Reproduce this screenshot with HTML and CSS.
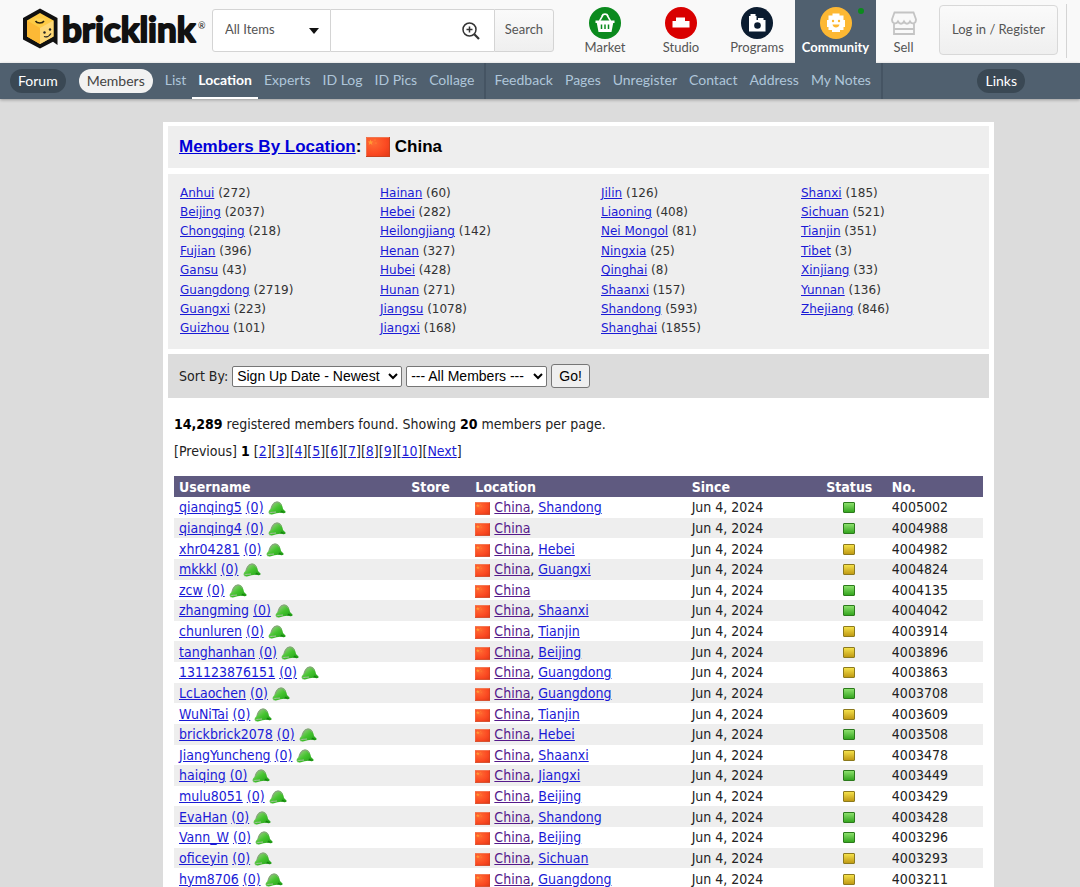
FILE: index.html
```html
<!DOCTYPE html>
<html lang="en">
<head>
    <meta charset="UTF-8">
    <meta name="viewport" content="width=device-width, initial-scale=1.0">
    <title>BrickLink Members By Location: China</title>
    <link rel="stylesheet" href="styles.css">
</head>
<body>
    <svg class="sprite" aria-hidden="true">
        <defs>
            <linearGradient id="capFill" x1="0" y1="0" x2="1" y2="1">
                <stop offset="0" stop-color="#b4cf9e"/>
                <stop offset="0.5" stop-color="#45c42f"/>
                <stop offset="1" stop-color="#1c9a14"/>
            </linearGradient>
            <radialGradient id="flagFill" cx="0.3" cy="0.3" r="0.9">
                <stop offset="0" stop-color="#ff6c33"/>
                <stop offset="0.6" stop-color="#fb4a22"/>
                <stop offset="1" stop-color="#e43a18"/>
            </radialGradient>
        </defs>
        <symbol id="cap" viewBox="0 0 18 14">
            <path d="M1 12.500C0 11 1 9.500 2.500 8C3.500 4 5.500 0.500 9 0.500C12.500 0.500 14.500 4 15 8L17.500 10.500C18 12 16.500 12.500 14.500 12C11 11.200 8 12.500 5 13.200C3 13.600 1.500 13.500 1 12.500Z" fill="url(#capFill)"/>
            <path d="M1.200 12.300C3 10.800 5 11.500 8 11" fill="none" stroke="#a9bfa2" stroke-width="1"/>
            <path d="M3 7.500C4 4 6 1.200 9 1C11 1 12.500 2.500 13.200 4.500" fill="none" stroke="#8f9c88" stroke-width="1"/>
            <path d="M13.500 9.500L17 11.500L12 11.500Z" fill="#16840f"/>
        </symbol>
        <symbol id="flag" viewBox="0 0 24 20">
            <rect width="24" height="20" fill="url(#flagFill)"/>
            <path d="M0.500 19.500V0.500H23.500" fill="none" stroke="#f0754f"/>
            <path d="M0 19.500H23.500V0" fill="none" stroke="#c9421f"/>
            <path d="M4.500 2.500L5.300 4.500L7.400 4.600L5.800 5.900L6.400 8L4.500 6.800L2.700 8L3.200 5.900L1.600 4.600L3.700 4.500Z" fill="#ff9a35"/>
            <circle cx="9" cy="3" r="0.600" fill="#ff9a35"/>
            <circle cx="10" cy="6" r="0.600" fill="#ff9a35"/>
        </symbol>
    </svg>

    <header class="header">
        <a href="#" class="logo" aria-label="bricklink">
            <svg width="182" height="44" viewBox="0 0 182 44">
                <path d="M18 0.500L35.500 10V37L31 33.800L18 40.500L1 31.500V10Z" fill="#111"/>
                <path d="M18 5L31.500 12.500V28.500L18 36L5 28.500V12.500Z" fill="#fecb45"/>
                <path d="M18 20L31.500 12.500V28.500L18 36Z" fill="#fdd878"/>
                <path d="M5 12.500L18 20V36L5 28.500Z" fill="#fcb936"/>
                <path d="M13 10.500V13.500C14.500 16 20.500 16 22.500 13.500V10.500" fill="#ffd65a"/>
                <path d="M13.500 13C15 15.500 20.500 15.500 22 13" fill="none" stroke="#2b220c" stroke-width="1.500"/>
                <circle cx="22.500" cy="24.500" r="1.200" fill="#222"/>
                <circle cx="28" cy="21.500" r="1.200" fill="#222"/>
                <path d="M22 28.500C24.500 29.500 27.500 28 29 25.500" fill="none" stroke="#222" stroke-width="1.300"/>
                <text x="40" y="34" class="logo-text">bricklink</text>
                <text x="176" y="21" class="logo-mark">®</text>
            </svg>
        </a>
        <form class="search">
            <select class="search-type" aria-label="Item type">
                <option>All Items</option>
            </select>
            <svg class="search-arrow" width="10" height="6" viewBox="0 0 10 6"><path d="M0 0H10L5 6Z" fill="#111"/></svg>
            <input type="text" class="search-input" aria-label="Search text">
            <svg class="search-zoom" width="18" height="18" viewBox="0 0 18 18" fill="none" stroke="#333">
                <circle cx="7.500" cy="7.500" r="6.500" stroke-width="1.500"/>
                <path d="M4.500 7.500H10.500M7.500 4.500V10.500" stroke-width="1.500"/>
                <path d="M12.300 12.300L17 17" stroke-width="2.200"/>
            </svg>
            <button type="submit" class="search-button">Search</button>
        </form>
        <nav class="sections" aria-label="Sections">
            <a href="#" class="section">
                <svg width="34" height="34" viewBox="0 0 34 34">
                    <circle cx="17" cy="17" r="16" fill="#0b8a1e"/>
                    <path d="M7.500 14.500H26.500V17H25.200L23.500 26H10.500L8.800 17H7.500Z" fill="#fff"/>
                    <path d="M11.500 15L15 9M22.500 15L19 9" stroke="#fff" stroke-width="1.500"/>
                    <path d="M14 10C15 7.500 19 7.500 20 10" fill="none" stroke="#fff" stroke-width="1.600"/>
                    <path d="M13.500 18.500V23M17 18.500V23M20.500 18.500V23" stroke="#0b8a1e" stroke-width="1.500"/>
                </svg>
                <span>Market</span>
            </a>
            <a href="#" class="section">
                <svg width="34" height="34" viewBox="0 0 34 34">
                    <circle cx="17" cy="17" r="16" fill="#d90000"/>
                    <path d="M8.500 15H12V11.500H21V15H25.500V21.500H8.500Z" fill="#fff"/>
                </svg>
                <span>Studio</span>
            </a>
            <a href="#" class="section">
                <svg width="34" height="34" viewBox="0 0 34 34">
                    <circle cx="17" cy="17" r="16" fill="#0b1c30"/>
                    <path d="M9 25.500V10H10.500V8H15.500V10H16.500V14H18V12H23.500V14H25.500V25.500Z" fill="#fff"/>
                    <circle cx="17.500" cy="19.500" r="3.300" fill="#0b1c30"/>
                </svg>
                <span>Programs</span>
            </a>
            <a href="#" class="section section-active">
                <svg width="34" height="34" viewBox="0 0 34 34">
                    <circle cx="17" cy="17" r="16" fill="#fdb833"/>
                    <path d="M13.500 7.500H20.500V9.500H24.500V14H26V21H24.500V24H21V26H13V24H9.500V21H8V14H9.500V9.500H13.500Z" fill="#fff"/>
                    <circle cx="14" cy="15" r="1.200" fill="#fdb833"/>
                    <circle cx="20" cy="15" r="1.200" fill="#fdb833"/>
                    <path d="M13.500 18.500H20.500C20 22.500 14 22.500 13.500 18.500Z" fill="#fdb833"/>
                </svg>
                <span>Community</span>
                <i class="online-dot"></i>
            </a>
            <a href="#" class="section section-sell">
                <svg width="34" height="34" viewBox="0 0 34 34" fill="none" stroke="#c4c4c4" stroke-width="1.800">
                    <path d="M7.500 6.500H26.500L29 13.500C29 18 24.500 18.500 23 15.500C21.500 18.500 18.500 18.500 17 15.500C15.500 18.500 12.500 18.500 11 15.500C9.500 18.500 5 18 5 13.500Z"/>
                    <path d="M7 17.500V28H27V17.500M7 23H27"/>
                </svg>
                <span>Sell</span>
            </a>
        </nav>
        <div class="account">
            <button type="button" class="login-button">Log in / Register</button>
        </div>
    </header>

    <nav class="menu" aria-label="Community">
        <a href="#" class="pill">Forum</a>
        <a href="#" class="pill pill-light">Members</a>
        <div class="menu-group">
            <a href="#">List</a>
            <a href="#" class="current">Location</a>
            <a href="#">Experts</a>
            <a href="#">ID Log</a>
            <a href="#">ID Pics</a>
            <a href="#">Collage</a>
        </div>
        <div class="menu-group">
            <a href="#">Feedback</a>
            <a href="#">Pages</a>
            <a href="#">Unregister</a>
            <a href="#">Contact</a>
            <a href="#">Address</a>
            <a href="#">My Notes</a>
        </div>
        <a href="#" class="pill pill-links">Links</a>
    </nav>

    <main class="content">
        <h1 class="title"><a href="#">Members By Location</a>: <svg class="flag-big"><use href="#flag"/></svg> China</h1>

        <div class="provinces">
            <ul>
                <li><a href="#">Anhui</a> (272)</li>
                <li><a href="#">Beijing</a> (2037)</li>
                <li><a href="#">Chongqing</a> (218)</li>
                <li><a href="#">Fujian</a> (396)</li>
                <li><a href="#">Gansu</a> (43)</li>
                <li><a href="#">Guangdong</a> (2719)</li>
                <li><a href="#">Guangxi</a> (223)</li>
                <li><a href="#">Guizhou</a> (101)</li>
            </ul>
            <ul>
                <li><a href="#">Hainan</a> (60)</li>
                <li><a href="#">Hebei</a> (282)</li>
                <li><a href="#">Heilongjiang</a> (142)</li>
                <li><a href="#">Henan</a> (327)</li>
                <li><a href="#">Hubei</a> (428)</li>
                <li><a href="#">Hunan</a> (271)</li>
                <li><a href="#">Jiangsu</a> (1078)</li>
                <li><a href="#">Jiangxi</a> (168)</li>
            </ul>
            <ul>
                <li><a href="#">Jilin</a> (126)</li>
                <li><a href="#">Liaoning</a> (408)</li>
                <li><a href="#">Nei Mongol</a> (81)</li>
                <li><a href="#">Ningxia</a> (25)</li>
                <li><a href="#">Qinghai</a> (8)</li>
                <li><a href="#">Shaanxi</a> (157)</li>
                <li><a href="#">Shandong</a> (593)</li>
                <li><a href="#">Shanghai</a> (1855)</li>
            </ul>
            <ul>
                <li><a href="#">Shanxi</a> (185)</li>
                <li><a href="#">Sichuan</a> (521)</li>
                <li><a href="#">Tianjin</a> (351)</li>
                <li><a href="#">Tibet</a> (3)</li>
                <li><a href="#">Xinjiang</a> (33)</li>
                <li><a href="#">Yunnan</a> (136)</li>
                <li><a href="#">Zhejiang</a> (846)</li>
            </ul>
        </div>

        <form class="sort">
            <label for="sortBy">Sort By:</label>
            <select id="sortBy" class="sort-by">
                <option>Sign Up Date - Newest</option>
            </select>
            <select class="sort-members" aria-label="Members">
                <option>--- All Members ---</option>
            </select>
            <button type="submit">Go!</button>
        </form>

        <div class="results">
            <p><b>14,289</b> registered members found. Showing <b>20</b> members per page.</p>
            <p>[Previous] <b>1</b> [<a href="#">2</a>][<a href="#">3</a>][<a href="#">4</a>][<a href="#">5</a>][<a href="#">6</a>][<a href="#">7</a>][<a href="#">8</a>][<a href="#">9</a>][<a href="#">10</a>][<a href="#">Next</a>]</p>

            <table class="members">
                <thead>
                    <tr>
                        <th class="col-user">Username</th>
                        <th class="col-store">Store</th>
                        <th class="col-location">Location</th>
                        <th class="col-since">Since</th>
                        <th class="col-status">Status</th>
                        <th class="col-no">No.</th>
                    </tr>
                </thead>
                <tbody id="memberRows"></tbody>
            </table>
        </div>
    </main>
    <script src="members.js"></script>
</body>
</html>
```
FILE: members.js
```js
// name, province, online status, member number
const members = [
    ['qianqing5', 'Shandong', 'green', 4005002],
    ['qianqing4', '', 'green', 4004988],
    ['xhr04281', 'Hebei', 'yellow', 4004982],
    ['mkkkl', 'Guangxi', 'yellow', 4004824],
    ['zcw', '', 'green', 4004135],
    ['zhangming', 'Shaanxi', 'green', 4004042],
    ['chunluren', 'Tianjin', 'yellow', 4003914],
    ['tanghanhan', 'Beijing', 'yellow', 4003896],
    ['131123876151', 'Guangdong', 'yellow', 4003863],
    ['LcLaochen', 'Guangdong', 'green', 4003708],
    ['WuNiTai', 'Tianjin', 'yellow', 4003609],
    ['brickbrick2078', 'Hebei', 'green', 4003508],
    ['JiangYuncheng', 'Shaanxi', 'yellow', 4003478],
    ['haiqing', 'Jiangxi', 'green', 4003449],
    ['mulu8051', 'Beijing', 'yellow', 4003429],
    ['EvaHan', 'Shandong', 'green', 4003428],
    ['Vann_W', 'Beijing', 'green', 4003296],
    ['oficeyin', 'Sichuan', 'yellow', 4003293],
    ['hym8706', 'Guangdong', 'yellow', 4003211]
];

document.getElementById('memberRows').innerHTML = members.map(([name, province, status, no]) => `
    <tr>
        <td><a href="#">${name}</a> <a href="#">(0)</a> <svg class="cap"><use href="#cap"/></svg></td>
        <td></td>
        <td><svg class="flag"><use href="#flag"/></svg> <a href="#" class="seen">China</a>${province ? `, <a href="#">${province}</a>` : ''}</td>
        <td>Jun 4, 2024</td>
        <td class="status"><i class="light ${status}"></i></td>
        <td>${no}</td>
    </tr>`).join('');
```
FILE: styles.css
```css
* {
    box-sizing: border-box;
}

body {
    margin: 0;
    background-color: #dcdcdc;
    color: #222;
    font-family: "DejaVu Sans Condensed", "DejaVu Sans", sans-serif;
    font-size: 14px;
}

a {
    color: #1a1ad6;
}

.sprite {
    position: absolute;
    width: 0;
    height: 0;
}

/* top bar */
.header {
    display: flex;
    align-items: flex-start;
    height: 63px;
    padding-left: 22px;
    background-color: #f9f9f9;
    font-family: Lato, sans-serif;
}

.logo {
    margin-top: 8px;
    width: 182px;
}

.logo svg {
    overflow: visible;
}

.logo-text {
    font-weight: bold;
    font-size: 35px;
    fill: #111;
    stroke: #111;
    stroke-width: 2px;
    stroke-linejoin: round;
}

.logo-mark {
    font-size: 9px;
    fill: #111;
}

.search {
    position: relative;
    display: flex;
    margin: 9px 0 0 8px;
    height: 43px;
    width: 342px;
}

.search-type,
.search-input,
.search-button {
    border: 1px solid #d4d4d4;
    background-color: #fff;
    color: #555;
    font-family: inherit;
    font-size: 13px;
}

.search-type {
    appearance: none;
    width: 119px;
    padding: 0 12px 4px;
    border-radius: 3px 0 0 3px;
}

.search-arrow {
    position: absolute;
    left: 97px;
    top: 19px;
}

.search-input {
    width: 163px;
    border-left: none;
    border-right: none;
    padding: 0 48px 0 12px;
}

.search-zoom {
    position: absolute;
    left: 250px;
    top: 13px;
}

.search-button {
    flex: 1;
    padding: 0 0 4px;
    border-radius: 0 3px 3px 0;
    background: linear-gradient(#fafafa, #efefef);
}

.sections {
    display: flex;
    height: 63px;
    margin-left: 13px;
}

.section {
    position: relative;
    display: flex;
    flex-direction: column;
    align-items: center;
    width: 76px;
    padding-top: 6px;
    color: #555;
    font-size: 13px;
    line-height: 14px;
    text-decoration: none;
}

.section-active {
    width: 81px;
    background-color: #50606f;
    color: #fff;
    font-weight: bold;
}

.section-sell {
    width: 55px;
}

.online-dot {
    position: absolute;
    top: 8px;
    right: 12px;
    width: 6px;
    height: 6px;
    border-radius: 3px;
    background-color: #0b8a1e;
}

.account {
    flex: 1;
    max-width: 136px;
    height: 54px;
    margin-top: 4px;
    padding: 1px 8px 0;
    border-right: 1px solid #d4d4d4;
}

.login-button {
    width: 100%;
    height: 50px;
    padding: 0 0 3px;
    border: 1px solid #d8d8d8;
    border-radius: 4px;
    background: linear-gradient(#fafafa, #efefef);
    color: #555;
    font-family: inherit;
    font-size: 13px;
}

/* blue menu */
.menu {
    display: flex;
    height: 36px;
    padding-left: 10px;
    background-color: #50606f;
    box-shadow: 0 1px 3px rgba(0, 0, 0, 0.3);
    font-family: Lato, sans-serif;
    font-size: 14px;
    white-space: nowrap;
}

.menu a {
    color: #afc6da;
    text-decoration: none;
}

.menu .pill {
    height: 24px;
    margin-top: 6px;
    margin-right: 13px;
    padding: 0 8px;
    border-radius: 12px;
    background-color: #3a4854;
    color: #fff;
    line-height: 24px;
}

.menu .pill-light {
    margin-right: 6px;
    background-color: #f2f2f2;
    color: #444;
}

.menu-group {
    display: flex;
    padding-right: 4px;
    border-right: 2px solid #455463;
}

.menu-group + .menu-group {
    padding-left: 2px;
}

.menu-group a {
    padding: 0 6px;
    line-height: 34px;
}

.menu-group .current {
    border-bottom: 2px solid #fff;
    color: #fff;
    font-weight: bold;
}

.menu .pill-links {
    margin-left: auto;
    margin-right: 55px;
}

/* page body */
.content {
    margin: 23px 86px 0 163px;
    padding: 4px 5px 0;
    background-color: #fff;
}

.title {
    height: 42px;
    margin: 0 0 6px;
    padding-left: 11px;
    background-color: #eee;
    color: #000;
    font-family: "Liberation Sans", Arial, sans-serif;
    font-size: 17px;
    line-height: 42px;
}

.title a {
    color: #0000d8;
}

.flag-big {
    width: 24px;
    height: 20px;
    vertical-align: -5px;
}

.provinces {
    display: grid;
    grid-template-columns: 200px 221px 200px 1fr;
    margin-bottom: 5px;
    padding: 9px 12px 11px;
    background-color: #eee;
    font-family: "DejaVu Sans", Verdana, sans-serif;
    font-size: 12px;
    color: #333;
}

.provinces ul {
    display: grid;
    grid-template-rows: repeat(8, 1fr);
    align-items: center;
    height: 155px;
    margin: 0;
    padding: 0;
    list-style: none;
}

.sort {
    display: flex;
    align-items: center;
    gap: 4px;
    height: 44px;
    padding: 0 11px;
    background-color: #dcdcdc;
}

.sort select,
.sort button {
    height: 21px;
    padding: 0;
    border: 1px solid #767676;
    border-radius: 2px;
    background-color: #fff;
    font-family: "Liberation Sans", Arial, sans-serif;
    font-size: 14px;
    color: #000;
}

.sort .sort-by {
    width: 170px;
}

.sort .sort-members {
    width: 141px;
}

.sort button {
    width: 39px;
    height: 24px;
    border-radius: 3px;
    background-color: #efefef;
}

.results {
    padding: 16px 6px 0;
}

.results p {
    margin: 0 0 6px;
    line-height: 21px;
}

.results b {
    color: #000;
}

.members {
    width: 100%;
    height: 413px;
    margin-top: 14px;
    border-collapse: collapse;
    table-layout: fixed;
    line-height: 18px;
}

.members th {
    height: 21px;
    padding: 0 5px;
    background-color: #5f5a80;
    color: #fff;
    text-align: left;
}

.members td {
    padding: 0 5px;
    white-space: nowrap;
}

.members tbody tr:nth-child(even) {
    background-color: #eee;
}

.col-user {
    width: 29%;
}

.col-store {
    width: 8%;
}

.col-location {
    width: 27%;
}

.col-since {
    width: 16%;
}

.col-status {
    width: 9%;
}

.col-no {
    width: 12%;
}

.members .seen {
    color: #551a8b;
}

.cap {
    width: 18px;
    height: 14px;
    vertical-align: -3px;
}

.flag {
    width: 15px;
    height: 13px;
    vertical-align: -3px;
}

.members .col-status,
.members .status {
    padding: 0 8px 0 5px;
    text-align: center;
}

.light {
    display: inline-block;
    width: 12px;
    height: 11px;
    border: 1px solid #2c7a1c;
    border-radius: 1px;
    vertical-align: -1px;
}

.green {
    background: linear-gradient(#8be06c, #35a51f);
}

.yellow {
    border-color: #8c7a1e;
    background: linear-gradient(#f4e04a, #c09a14);
}
```
